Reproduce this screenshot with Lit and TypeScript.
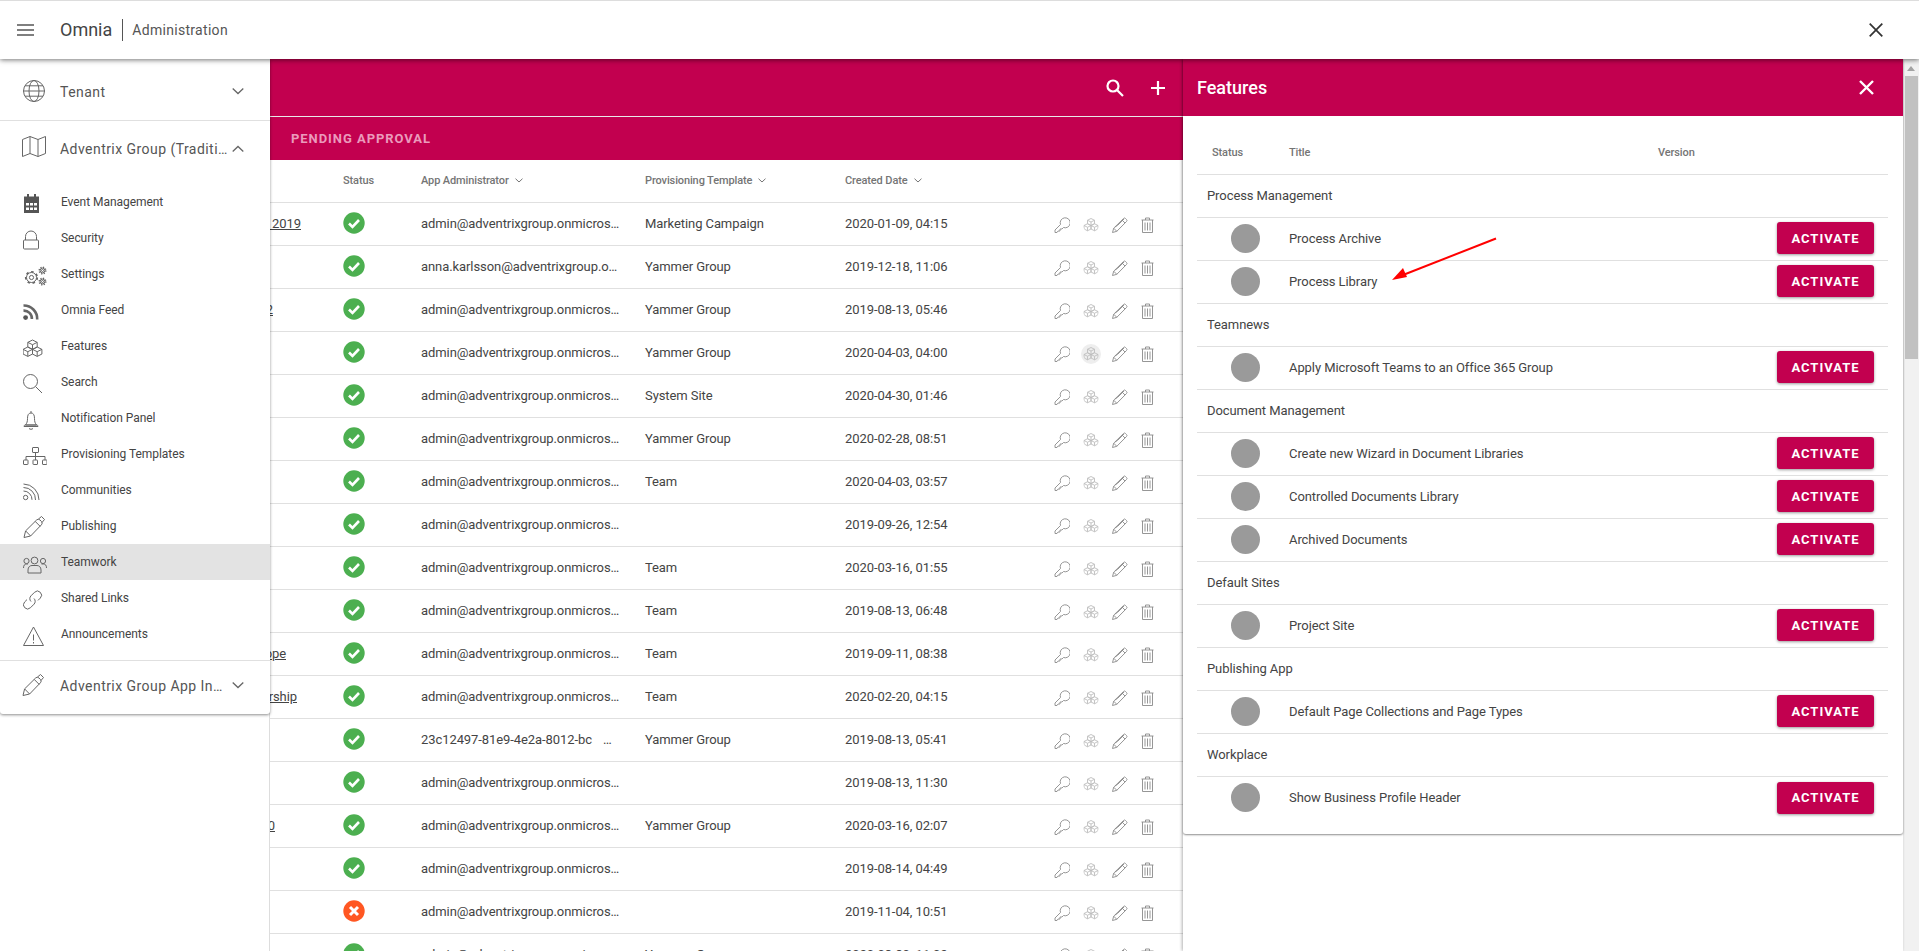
import { LitElement, css, html, svg } from 'lit';
import { customElement } from 'lit/decorators.js';

const ADMIN = 'admin@adventrixgroup.onmicros…';

type Row = { name: string; end: number; ok: boolean; admin: string; tpl: string; date: string };

// end = x where the underlined title stops, the rest of it sits below the drawer
const ROWS: Row[] = [
  { name: 'Marketing Event 2019', end: 301, ok: true, admin: ADMIN, tpl: 'Marketing Campaign', date: '2020-01-09, 04:15' },
  { name: '', end: 0, ok: true, admin: 'anna.karlsson@adventrixgroup.o…', tpl: 'Yammer Group', date: '2019-12-18, 11:06' },
  { name: 'Sales Team 2', end: 273, ok: true, admin: ADMIN, tpl: 'Yammer Group', date: '2019-08-13, 05:46' },
  { name: '', end: 0, ok: true, admin: ADMIN, tpl: 'Yammer Group', date: '2020-04-03, 04:00' },
  { name: '', end: 0, ok: true, admin: ADMIN, tpl: 'System Site', date: '2020-04-30, 01:46' },
  { name: '', end: 0, ok: true, admin: ADMIN, tpl: 'Yammer Group', date: '2020-02-28, 08:51' },
  { name: '', end: 0, ok: true, admin: ADMIN, tpl: 'Team', date: '2020-04-03, 03:57' },
  { name: '', end: 0, ok: true, admin: ADMIN, tpl: '', date: '2019-09-26, 12:54' },
  { name: '', end: 0, ok: true, admin: ADMIN, tpl: 'Team', date: '2020-03-16, 01:55' },
  { name: '', end: 0, ok: true, admin: ADMIN, tpl: 'Team', date: '2019-08-13, 06:48' },
  { name: 'Team Europe', end: 286, ok: true, admin: ADMIN, tpl: 'Team', date: '2019-09-11, 08:38' },
  { name: 'Partnership', end: 297, ok: true, admin: ADMIN, tpl: 'Team', date: '2020-02-20, 04:15' },
  { name: '', end: 0, ok: true, admin: '', tpl: 'Yammer Group', date: '2019-08-13, 05:41' },
  { name: '', end: 0, ok: true, admin: ADMIN, tpl: '', date: '2019-08-13, 11:30' },
  { name: 'Project 2020', end: 275, ok: true, admin: ADMIN, tpl: 'Yammer Group', date: '2020-03-16, 02:07' },
  { name: '', end: 0, ok: true, admin: ADMIN, tpl: '', date: '2019-08-14, 04:49' },
  { name: '', end: 0, ok: false, admin: ADMIN, tpl: '', date: '2019-11-04, 10:51' },
  { name: '', end: 0, ok: true, admin: ADMIN, tpl: 'Yammer Group', date: '2020-03-30, 11:02' },
];

const FEATURES: { group: string; items: string[] }[] = [
  { group: 'Process Management', items: ['Process Archive', 'Process Library'] },
  { group: 'Teamnews', items: ['Apply Microsoft Teams to an Office 365 Group'] },
  { group: 'Document Management', items: ['Create new Wizard in Document Libraries', 'Controlled Documents Library', 'Archived Documents'] },
  { group: 'Default Sites', items: ['Project Site'] },
  { group: 'Publishing App', items: ['Default Page Collections and Page Types'] },
  { group: 'Workplace', items: ['Show Business Profile Header'] },
];

// one isometric box, s = half width
const cube = (x: number, y: number, s: number) => svg`
  <path d="M${x} ${y - s}l${s} ${s / 2}v${s}l${-s} ${s / 2}l${-s} ${-s / 2}v${-s}zM${x - s} ${y - s / 2}l${s} ${s / 2}l${s} ${-s / 2}M${x} ${y}v${s}"/>`;

const gear = (x: number, y: number, r: number) => svg`
  <circle cx=${x} cy=${y} r=${r}/>
  <circle cx=${x} cy=${y} r=${r * 0.42}/>
  <circle cx=${x} cy=${y} r=${r + 0.8} stroke-width="1.6" stroke-dasharray=${`${r * 0.5} ${r * 0.55}`}/>`;

const PEN = svg`<path d="M1 22.5l1.6-6.6L13.6 5a2.4 2.4 0 0 1 3.4 0l1.4 1.4a2.4 2.4 0 0 1 0 3.4L7.6 21zM2.6 15.9l5 5.1M12.2 6.4l5 5M15.5 4l3-2.5 3 3-2.5 3"/>`;

const ICONS: Record<string, unknown> = {
  globe: svg`<circle cx="12" cy="12" r="10.5"/><ellipse cx="12" cy="12" rx="5" ry="10.5"/><path d="M1.5 12h21M3 6.8h18M3 17.2h18"/>`,
  map: svg`<path d="M0.5 5.5L8 2.5l8 3 7.5-3v17l-7.5 3-8-3-7.5 3zM8 2.5v17M16 5.5v17"/>`,
  calendar: svg`<g stroke="none" fill="#555"><path d="M4 3h2v3H4zM11 3h2v3h-2z"/><path d="M1 5.5h15V22H1z"/></g>
    <g stroke="none" fill="#fff"><path d="M3 12h3v2.5H3zM7 12h3v2.5H7zM11 12h3v2.5h-3zM3 16.5h3V19H3zM7 16.5h3V19H7zM11 16.5h3V19h-3z"/></g>`,
  lock: svg`<rect x="0.5" y="13" width="15" height="9" rx="1"/><path d="M2.5 13v-3.5a5.5 5.5 0 0 1 11 0V13"/>`,
  gears: svg`${gear(8.5, 14.5, 5)}${gear(19.5, 7.5, 2.4)}${gear(19.5, 18.5, 2.4)}`,
  rss: svg`<circle cx="2.6" cy="18.6" r="2.4" fill="#555" stroke="none"/><path stroke-width="2.6" d="M0.5 11.6a8 8 0 0 1 8.4 8.4M0.5 6.5A13.4 13.4 0 0 1 14.2 20.5"/>`,
  cubes: svg`${cube(9.5, 9.7, 4.7)}${cube(4.8, 16.7, 4.7)}${cube(14.2, 16.7, 4.7)}`,
  search: svg`<circle cx="7.5" cy="10.5" r="7"/><path d="M12.6 15.6L19 22"/>`,
  bell: svg`<path d="M8 4v2M2.5 18c1.5-2 2-3.500 2-6.500C4.500 8 5.500 6 8 6s3.500 2 3.500 5.500c0 3 .500 4.500 2 6.500zM1 19.500c0-1 .6-1.500 1.500-1.500h11c.9 0 1.500.5 1.500 1.500zM6 21.500c1.200 1 2.800 1 4 0"/>`,
  sitemap: svg`<rect x="9.500" y="4.500" width="6" height="5" rx=".5"/><path d="M12.500 9.500v4M3 17v-3.500h19V17M12.500 13.500V17"/><rect x=".5" y="17" width="4.500" height="4.500" rx=".5"/><rect x="10" y="17" width="4.500" height="4.500" rx=".5"/><rect x="19.500" y="17" width="4.500" height="4.500" rx=".5"/>`,
  feed: svg`<circle cx="2.600" cy="18.500" r="2.200"/><path d="M0.500 12a8.500 8.500 0 0 1 8.500 8.800M0.500 8.500A12 12 0 0 1 12.500 21M0.500 5A15.800 15.800 0 0 1 16 21"/>`,
  pen: PEN,
  people: svg`<circle cx="3.500" cy="10" r="2.600"/><circle cx="11.500" cy="9.500" r="3.400"/><circle cx="20" cy="10" r="2.600"/><path d="M0.500 17c0-2.500 1-4 3-4h1.500M23.500 17c0-2.500-1-4-3-4H18.500M5 22v-3c0-3 2-4.500 4-4.500h5c2 0 4 1.500 4 4.500v3z"/>`,
  link: svg`<path d="M8 14.500a4 4 0 0 1 0-5.700l3.500-3.500a4.100 4.100 0 0 1 5.800 5.800l-2.300 2.300"/><path d="M11 11.500a4 4 0 0 1 0 5.700l-3.500 3.500a4.100 4.100 0 0 1-5.800-5.800l2.300-2.300"/>`,
  warning: svg`<path d="M10.500 4L20.500 22.500H.5zM10.500 11.500v6M10.500 19v1.500"/>`,
};

const rowIcon = (name: 'key' | 'cube' | 'pencil' | 'trash') => {
  if (name === 'key') return svg`<path d="M1 15.500v-2.500l5.500-5.500a5 5 0 1 1 3 3L8 12H6v2H4l-1 1.500zM11.500 4.500h.01"/>`;
  if (name === 'cube') return svg`${cube(8, 5, 3.5)}${cube(4.5, 10.25, 3.5)}${cube(11.5, 10.25, 3.5)}`;
  if (name === 'pencil') return svg`<path d="M.5 15.500l1.200-4.300L11.500 1.500a1.400 1.400 0 0 1 2 0l1 1a1.400 1.400 0 0 1 0 2L4.800 14.300zM1.700 11.200l3.100 3.100M10 3l3 3M3 10l2.500-1.500L12 2"/>`;
  return svg`<path d="M.5 3h12M4.500 3V1h4v2M1.500 3v12.500h10V3M4 5.500v8M6.500 5.500v8M9 5.500v8"/>`;
};

@customElement('app-root')
export class AppRoot extends LitElement {
  static styles = css`
    :host {
      display: block;
      height: 951px;
      overflow: hidden;
      position: relative;
      background: #fff;
      font-family: Roboto, sans-serif;
      color: #444;
    }
    svg {
      display: block;
      fill: none;
      stroke: #666;
      stroke-width: 1;
      flex: none;
    }
    .topbar {
      height: 59px;
      box-sizing: border-box;
      border-top: 1px solid #ddd;
      display: flex;
      align-items: center;
      padding: 0 36px 0 17px;
      background: #fff;
      position: relative;
      z-index: 3;
      box-shadow: 0 1px 5px rgba(0, 0, 0, 0.55);
    }
    .topbar .burger {
      stroke: #555;
      stroke-width: 1.6;
    }
    .brand {
      margin-left: 26px;
      font-size: 18px;
      color: #444;
      padding-right: 10px;
      border-right: 1px solid #555;
      line-height: 22px;
    }
    .area {
      margin-left: 9px;
      font-size: 14px;
      letter-spacing: 0.3px;
      color: #555;
      flex: 1;
    }
    .topbar .close {
      stroke: #333;
      stroke-width: 1.7;
    }
    .page {
      display: flex;
      height: 892px;
    }
    .drawer {
      width: 270px;
      height: 655px;
      flex: none;
      background: #fff;
      position: relative;
      z-index: 2;
      border-radius: 0 0 3px 3px;
      box-shadow: 0 1px 3px rgba(0, 0, 0, 0.45);
    }
    .section {
      display: flex;
      align-items: center;
      box-sizing: border-box;
      padding: 0 26px 0 22px;
      font-size: 14px;
      letter-spacing: 0.45px;
      color: #555;
    }
    .section span {
      margin-left: 14px;
      flex: 1;
      min-width: 0;
      white-space: nowrap;
      padding-top: 3px;
    }
    .section .chev {
      margin-left: 5px;
      stroke-width: 1.3;
    }
    .tenant {
      height: 62px;
      padding-top: 2px;
      border-bottom: 1px solid #e0e0e0;
    }
    .adv {
      height: 55px;
      padding-bottom: 5px;
    }
    .adv span {
      padding-top: 6px;
    }
    .adv .chev {
      position: relative;
      top: 2.5px;
    }
    .menu {
      padding-top: 8px;
      padding-bottom: 8px;
      border-bottom: 1px solid #e0e0e0;
    }
    .item {
      height: 36px;
      display: flex;
      align-items: center;
      padding-left: 23px;
      font-size: 12px;
      letter-spacing: -0.05px;
      color: #444;
    }
    .item svg {
      margin-right: 14px;
      position: relative;
      top: 0.5px;
    }
    .item.active {
      background: #e3e3e3;
    }
    .last {
      height: 52px;
      padding-bottom: 5px;
    }
    .list {
      width: 913px;
      flex: none;
      overflow: hidden;
      box-shadow: -1px 0 0 #ddd;
    }
    .band {
      background: #c2004f;
      height: 57px;
      border-bottom: 1px solid #e8e8e8;
      display: flex;
      align-items: center;
      justify-content: flex-end;
      gap: 26px;
      padding-right: 17px;
    }
    .band svg {
      stroke: #fff;
      stroke-width: 2.2;
    }
    .tabs {
      background: #c2004f;
      height: 43px;
      display: flex;
      align-items: center;
      padding-left: 21px;
      font-size: 13px;
      font-weight: 700;
      letter-spacing: 0.95px;
      color: #eb9abc;
    }
    .row {
      display: grid;
      grid-template-columns: 73px 78px 224px 200px 209px 1fr;
      height: 43.03px;
      box-sizing: border-box;
      padding-bottom: 1px;
      border-bottom: 1px solid #e0e0e0;
      align-items: center;
      font-size: 13px;
      letter-spacing: -0.08px;
      color: #444;
    }
    .row.head {
      font-size: 11px;
      font-weight: 500;
      letter-spacing: -0.12px;
      padding-bottom: 2px;
      color: #757575;
    }
    .head span {
      display: flex;
      align-items: center;
      gap: 6px;
    }
    .head svg {
      stroke: #757575;
    }
    .title {
      display: flex;
      justify-content: flex-end;
      overflow: hidden;
      white-space: nowrap;
      text-decoration: underline;
    }
    .status {
      width: 22px;
      height: 22px;
      margin-top: -1px;
    }
    .guid {
      display: flex;
      white-space: nowrap;
    }
    .guid i {
      font-style: normal;
      margin-left: 11px;
    }
    .actions {
      display: flex;
      gap: 13px;
    }
    .actions svg {
      stroke: #8a8a8a;
      stroke-width: 0.9;
      margin-top: 3px;
    }
    .actions .cube {
      stroke: #bdbdbd;
      border-radius: 50%;
    }
    .actions .cube.hover {
      background: #eee;
      box-shadow: 0 0 0 2px #eee;
    }
    .panel {
      width: 720px;
      flex: none;
      position: relative;
      z-index: 1;
      box-shadow: -1px 0 3px rgba(0, 0, 0, 0.3);
      background: #fff;
    }
    .card {
      height: 775px;
      border-radius: 0 0 3px 3px;
      box-shadow: 0 1px 2px rgba(0, 0, 0, 0.45);
      background: #fff;
    }
    .panel-bar {
      height: 57px;
      background: #c2004f;
      display: flex;
      align-items: center;
      justify-content: space-between;
      padding: 0 29px 0 14px;
      font-size: 18px;
      font-weight: 500;
      color: #fff;
    }
    .panel-bar svg {
      stroke: #fff;
      stroke-width: 2.4;
    }
    .features {
      margin: 0 15px 0 14px;
    }
    .fhead {
      height: 59px;
      box-sizing: border-box;
      padding-top: 30px;
      border-bottom: 1px solid #e0e0e0;
      display: grid;
      grid-template-columns: 92px 369px 1fr;
      font-size: 11px;
      font-weight: 500;
      letter-spacing: -0.12px;
      color: #757575;
    }
    .fhead span:first-child {
      padding-left: 15px;
    }
    .frow {
      height: 43.03px;
      box-sizing: border-box;
      border-bottom: 1px solid #e0e0e0;
      display: flex;
      align-items: center;
      font-size: 13px;
      letter-spacing: -0.08px;
      color: #444;
    }
    .frow:last-child {
      border-bottom: none;
    }
    .frow.group {
      padding-left: 10px;
      padding-bottom: 2px;
    }
    .dot {
      width: 29px;
      height: 29px;
      border-radius: 50%;
      background: #9a9a9a;
      margin: 0 29px 2px 34px;
      flex: none;
    }
    .frow .name {
      flex: 1;
      padding-bottom: 2px;
    }
    .activate {
      width: 97px;
      height: 32px;
      margin: 0 14px 2px 0;
      border: none;
      border-radius: 3px;
      background: #c2004f;
      color: #fff;
      font: 700 13px Roboto, sans-serif;
      letter-spacing: 1px;
      padding: 0;
      box-shadow: 0 1px 3px rgba(0, 0, 0, 0.4);
    }
    .scrollbar {
      width: 16px;
      flex: none;
      background: #f1f1f1;
      display: flex;
      flex-direction: column;
      align-items: center;
    }
    .scroll-up {
      width: 0;
      height: 0;
      margin: 7px 0 5px;
      border-left: 4px solid transparent;
      border-right: 4px solid transparent;
      border-bottom: 5px solid #a3a3a3;
    }
    .thumb {
      width: 13px;
      height: 283px;
      background: #c1c1c1;
    }
    .arrow {
      position: absolute;
      left: 1385px;
      top: 232px;
      z-index: 4;
      stroke: none;
    }
  `;

  private sideItem(icon: string, label: string, active = false) {
    return html`
      <div class="item ${active ? 'active' : ''}">
        <svg width="24" height="24" viewBox="0 0 24 24">${ICONS[icon]}</svg>
        ${label}
      </div>
    `;
  }

  private section(cls: string, icon: string, label: string, up: boolean) {
    return html`
      <div class="section ${cls}">
        <svg width="24" height="24" viewBox="0 0 24 24">${ICONS[icon]}</svg>
        <span>${label}</span>
        <svg class="chev" width="12" height="8" viewBox="0 0 12 8">
          <path d=${up ? 'M.7 6.5L6 1.500l5.300 5' : 'M.7 1.500L6 6.500l5.300-5'} />
        </svg>
      </div>
    `;
  }

  private renderRow(r: Row, i: number) {
    return html`
      <div class="row">
        <div class="title" style="padding-right:${r.end ? 343 - r.end : 0}px">${r.name}</div>
        ${r.ok
          ? html`<svg class="status" viewBox="0 0 22 22" style="stroke:none">
              <circle cx="11" cy="11" r="10.700" fill="#4caf50" />
              <path d="M6 11.500l3.500 3.500 6.500-7" fill="none" stroke="#fff" stroke-width="2.600" />
            </svg>`
          : html`<svg class="status" viewBox="0 0 22 22" style="stroke:none">
              <circle cx="11" cy="11" r="10.700" fill="#ff5722" />
              <path d="M7 7l8 8M15 7l-8 8" fill="none" stroke="#fff" stroke-width="3" />
            </svg>`}
        ${r.admin
          ? html`<div>${r.admin}</div>`
          : html`<div class="guid"><span>23c12497-81e9-4e2a-8012-bc</span><i>…</i></div>`}
        <div>${r.tpl}</div>
        <div>${r.date}</div>
        <div class="actions">
          <svg width="16" height="16" viewBox="0 0 16 16">${rowIcon('key')}</svg>
          <svg class="cube ${i === 3 ? 'hover' : ''}" width="16" height="16" viewBox="0 0 16 16">${rowIcon('cube')}</svg>
          <svg width="16" height="16" viewBox="0 0 16 16">${rowIcon('pencil')}</svg>
          <svg width="13" height="16" viewBox="0 0 13 16">${rowIcon('trash')}</svg>
        </div>
      </div>
    `;
  }

  render() {
    const small = html`<svg width="8" height="5" viewBox="0 0 8 5"><path d="M.5.7L4 4l3.500-3.300" /></svg>`;
    return html`
      <div class="topbar">
        <svg class="burger" width="17" height="14" viewBox="0 0 17 14"><path d="M0 2h17M0 7h17M0 12h17" /></svg>
        <div class="brand">Omnia</div>
        <div class="area">Administration</div>
        <svg class="close" width="14" height="14" viewBox="0 0 14 14"><path d="M.7.7l12.600 12.600M13.300.7L.7 13.300" /></svg>
      </div>
      <div class="page">
        <nav class="drawer">
          ${this.section('tenant', 'globe', 'Tenant', false)}
          ${this.section('adv', 'map', 'Adventrix Group (Traditi…', true)}
          <div class="menu">
            ${this.sideItem('calendar', 'Event Management')}
            ${this.sideItem('lock', 'Security')}
            ${this.sideItem('gears', 'Settings')}
            ${this.sideItem('rss', 'Omnia Feed')}
            ${this.sideItem('cubes', 'Features')}
            ${this.sideItem('search', 'Search')}
            ${this.sideItem('bell', 'Notification Panel')}
            ${this.sideItem('sitemap', 'Provisioning Templates')}
            ${this.sideItem('feed', 'Communities')}
            ${this.sideItem('pen', 'Publishing')}
            ${this.sideItem('people', 'Teamwork', true)}
            ${this.sideItem('link', 'Shared Links')}
            ${this.sideItem('warning', 'Announcements')}
          </div>
          ${this.section('last', 'pen', 'Adventrix Group App In…', false)}
        </nav>
        <section class="list">
          <div class="band">
            <svg width="18" height="18" viewBox="0 0 18 18"><circle cx="7" cy="7" r="5.500" /><path d="M11 11l6 6" /></svg>
            <svg width="16" height="16" viewBox="0 0 16 16"><path d="M8 1v14M1 8h14" /></svg>
          </div>
          <div class="tabs">PENDING APPROVAL</div>
          <div class="row head">
            <div></div>
            <div>Status</div>
            <span>App Administrator ${small}</span>
            <span>Provisioning Template ${small}</span>
            <span>Created Date ${small}</span>
            <div></div>
          </div>
          ${ROWS.map((r, i) => this.renderRow(r, i))}
        </section>
        <section class="panel">
          <div class="card">
            <div class="panel-bar">
              Features
              <svg width="15" height="15" viewBox="0 0 15 15"><path d="M1 1l13 13M14 1L1 14" /></svg>
            </div>
            <div class="features">
              <div class="fhead"><span>Status</span><span>Title</span><span>Version</span></div>
              ${FEATURES.map(
                (f) => html`
                  <div class="frow group">${f.group}</div>
                  ${f.items.map(
                    (t) => html`
                      <div class="frow">
                        <div class="dot"></div>
                        <div class="name">${t}</div>
                        <button class="activate">ACTIVATE</button>
                      </div>
                    `
                  )}
                `
              )}
            </div>
          </div>
        </section>
        <div class="scrollbar">
          <div class="scroll-up"></div>
          <div class="thumb"></div>
        </div>
      </div>
      <svg class="arrow" width="115" height="52" viewBox="0 0 115 52">
        <path d="M111 6.500L18 43" stroke="#f00" stroke-width="2" fill="none" />
        <path d="M7 48l11-12 4 9z" fill="#f00" />
      </svg>
    `;
  }
}

declare global {
  interface HTMLElementTagNameMap {
    'app-root': AppRoot;
  }
}
